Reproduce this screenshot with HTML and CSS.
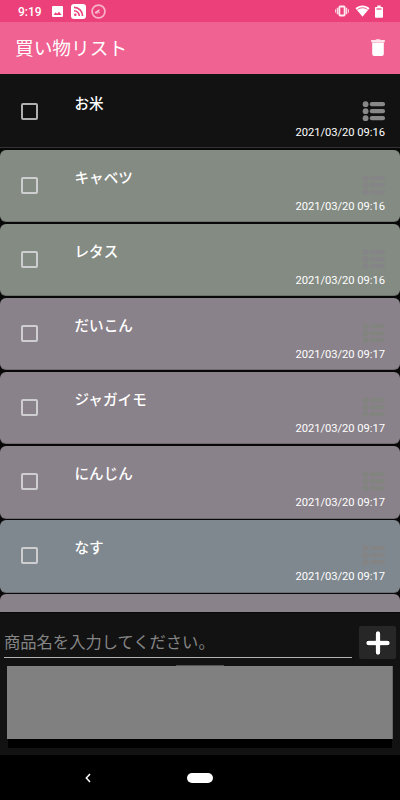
FILE: index.html
```
<!DOCTYPE html>
<html lang="ja">
<head>
<meta charset="utf-8">
<title>買い物リスト</title>
<link rel="stylesheet" href="styles.css">
</head>
<body>
<svg width="0" height="0" class="defs">
  <symbol id="list" viewBox="0 0 23 21">
    <circle cx="3.600" cy="3.200" r="2.900"/><circle cx="3.600" cy="10.200" r="2.900"/><circle cx="3.600" cy="17.200" r="2.900"/>
    <rect x="7.800" y="1.100" width="15.200" height="4.200" rx="2"/><rect x="7.800" y="8.100" width="15.200" height="4.200" rx="2"/><rect x="7.800" y="15.100" width="15.200" height="4.200" rx="2"/>
  </symbol>
</svg>
<div class="status">
  <span class="clock">9:19</span>
  <svg class="s-img" width="11" height="11" viewBox="0 0 11 11"><rect width="11" height="11" rx="1" fill="#fff"/><path d="M1.600 9 3.700 6.300 5 7.800 7 5.800 9.600 9z" fill="#ec407a"/></svg>
  <svg class="s-rss" width="15" height="15" viewBox="0 0 15 15"><rect width="15" height="15" rx="3" fill="#fff"/><g fill="none" stroke="#ec407a" stroke-width="1.600"><path d="M3 3.400a8.600 8.600 0 0 1 8.600 8.600M3 6.700A5.300 5.300 0 0 1 8.300 12"/></g><circle cx="4.300" cy="10.700" r="1.300" fill="#ec407a"/></svg>
  <svg class="s-round" width="15" height="15" viewBox="0 0 15 15" fill="none" stroke="#fff" stroke-opacity=".72"><circle cx="7.500" cy="7.500" r="6.400" stroke-width="1.700" stroke-opacity=".6"/><path d="M4 8.800 8.500 5.800M4.300 9h2.700M7 7.300l1.600 1.500" stroke-width="1.100"/></svg>
  <span class="grow"></span>
  <svg class="s-vib" width="14" height="12" viewBox="0 0 14 12" fill="none" stroke="#fff"><rect x="4.400" y="1.500" width="5.200" height="9" rx=".8" stroke-width="1.800" stroke-opacity=".9"/><path d="M2.500 2.800v6.400M11.500 2.800v6.400" stroke-width="1.500" stroke-opacity=".8"/><path d="M.6 4.300v3.400M13.400 4.300v3.400" stroke-width="1" stroke-opacity=".8"/></svg>
  <svg class="s-wifi" width="15" height="12" viewBox="0 0 15 12"><path d="M.5 3.200C4.500-.3 10.500-.3 14.500 3.200L7.500 11.800z" fill="#fff"/><path d="M2.500 4.500C5.500 2.200 9.500 2.200 12.500 4.500" fill="none" stroke="#ec407a" stroke-width=".9"/></svg>
  <svg class="s-bat" width="8" height="13" viewBox="0 0 8 13"><path d="M2.300.4h3.400V2H7.200q.8 0 .8.800V12q0 .8-.8.800H.8Q0 12.800 0 12V2.800Q0 2 .8 2h1.500z" fill="#fff"/><path d="M1.500 4h5" stroke="#ec407a" stroke-width="1.200"/></svg>
</div>
<header class="appbar">
  <h1>買い物リスト</h1>
  <svg width="14" height="18" viewBox="0 0 14 18"><path d="M4.500 1 5 .3h4l.5.7h4.300v2.200H.2V1z" fill="#fff" fill-opacity=".82"/><path d="M1.200 3.600h11.600V15q0 2-2 2H3.200q-2 0-2-2z" fill="#fff"/></svg>
</header>
<main class="list">
  <article class="row dark"><i class="check"></i><b>お米</b><div class="meta"><svg><use href="#list"/></svg><time>2021/03/20 09:16</time></div></article>
  <article class="row green"><i class="check"></i><b>キャベツ</b><div class="meta"><svg><use href="#list"/></svg><time>2021/03/20 09:16</time></div></article>
  <article class="row green"><i class="check"></i><b>レタス</b><div class="meta"><svg><use href="#list"/></svg><time>2021/03/20 09:16</time></div></article>
  <article class="row mauve"><i class="check"></i><b>だいこん</b><div class="meta"><svg><use href="#list"/></svg><time>2021/03/20 09:17</time></div></article>
  <article class="row mauve"><i class="check"></i><b>ジャガイモ</b><div class="meta"><svg><use href="#list"/></svg><time>2021/03/20 09:17</time></div></article>
  <article class="row mauve"><i class="check"></i><b>にんじん</b><div class="meta"><svg><use href="#list"/></svg><time>2021/03/20 09:17</time></div></article>
  <article class="row blue"><i class="check"></i><b>なす</b><div class="meta"><svg><use href="#list"/></svg><time>2021/03/20 09:17</time></div></article>
  <article class="row mauve"></article>
</main>
<section class="entry">
  <div class="form">
    <div class="field">商品名を入力してください。</div>
    <div class="add"><svg width="24" height="24" viewBox="0 0 24 24"><path d="M12 2.500v19M2.500 12h19" stroke="#000" stroke-width="5.400" stroke-linecap="round"/><path d="M12 2.500v19M2.500 12h19" stroke="#fff" stroke-width="4.400" stroke-linecap="round"/></svg></div>
  </div>
  <div class="handle"></div>
  <div class="ad"></div>
  <div class="adfoot"></div>
</section>
<nav class="nav">
  <svg width="6" height="10" viewBox="0 0 6 10"><path d="M5 1 1.300 5 5 9" fill="none" stroke="#fff" stroke-width="1.500"/></svg>
  <span class="home"></span>
</nav>
</body>
</html>
```
FILE: styles.css
```
* { box-sizing: border-box; }
body {
  margin: 0;
  width: 400px;
  height: 800px;
  overflow: hidden;
  display: flex;
  flex-direction: column;
  background: #000;
  color: #fff;
  font-family: Roboto, "Noto Sans CJK JP", sans-serif;
}
svg { display: block; flex: none; }
.defs { display: none; }
.status {
  height: 22px;
  flex: none;
  display: flex;
  align-items: center;
  padding: 0 17px 0 18px;
  background: #ec407a;
}
.clock { width: 34px; font-size: 12px; font-weight: 500; line-height: 22px; padding-top: 1px; }
.s-img { margin-top: 1px; }
.s-rss { margin-left: 8px; }
.s-round { margin-left: 5px; }
.grow { flex: 1; }
.s-wifi { margin-left: 6px; }
.s-bat { margin-left: 5px; }
.appbar {
  height: 52px;
  flex: none;
  display: flex;
  align-items: center;
  justify-content: space-between;
  padding: 0 15px;
  background: #f06292;
}
h1 { margin: 0; font-size: 18.700px; font-weight: 400; line-height: 52px; padding-top: 2px; }
.list {
  height: 538px;
  flex: none;
  overflow: hidden;
  background: #080808;
}
.row {
  height: 72.600px;
  margin-bottom: 1.500px;
  display: flex;
  padding: 0 15px 0 21px;
  border-radius: 6px;
  border-bottom: 1px solid rgba(0, 0, 0, .18);
}
.dark {
  height: 74.100px;
  margin-bottom: 1.500px;
  padding-top: 1.500px;
  background: #121212;
  border-radius: 0;
  border-bottom-color: #333;
}
.green { background: #848b83; --icon: #858486; }
.mauve { background: #8a828a; --icon: #828480; }
.blue { background: #80888f; --icon: #858484; }
.dark { --icon: #888; }
.check {
  width: 17px;
  height: 17px;
  flex: none;
  margin-top: 27px;
  border: 2px solid #ceced0;
  border-radius: 2px;
}
.dark .check { border-color: #b0b0b0; }
.row b {
  margin-left: 36.500px;
  flex: 1;
  font-size: 14.600px;
  font-weight: 500;
  line-height: 22px;
  padding-top: 17px;
}
.meta {
  display: flex;
  flex-direction: column;
  align-items: flex-end;
  padding-top: 25px;
}
.meta svg { width: 23px; height: 21px; fill: var(--icon); }
time { font-size: 11.200px; line-height: 14px; margin-top: 4px; letter-spacing: -.04px; white-space: nowrap; }
.entry {
  height: 143px;
  flex: none;
  background: #121212;
  border-top: 1px solid #080808;
  padding: 13px 4px 0;
}
.form { display: flex; height: 34px; justify-content: space-between; }
.field {
  width: 348px;
  height: 32px;
  border-bottom: 1px solid #b3b3b3;
  font-size: 16.300px;
  line-height: 31px;
  padding-top: 1px;
  color: #858585;
  white-space: nowrap;
}
.add {
  width: 37px;
  height: 33px;
  display: flex;
  align-items: center;
  justify-content: center;
  background: #272727;
  border-radius: 2px;
}
.handle { width: 48px; height: 1px; margin: 5px auto 0; background: #555; }
.ad { height: 73px; margin: 0 3px; background: #808080; border-right: 1px solid #666; }
.adfoot { height: 9px; margin: 0 4px; background: #000; }
.nav {
  height: 45px;
  flex: none;
  display: flex;
  align-items: center;
  padding-left: 85px;
}
.home { width: 26px; height: 10px; margin-left: 96px; border-radius: 5px; background: #fff; }
```
